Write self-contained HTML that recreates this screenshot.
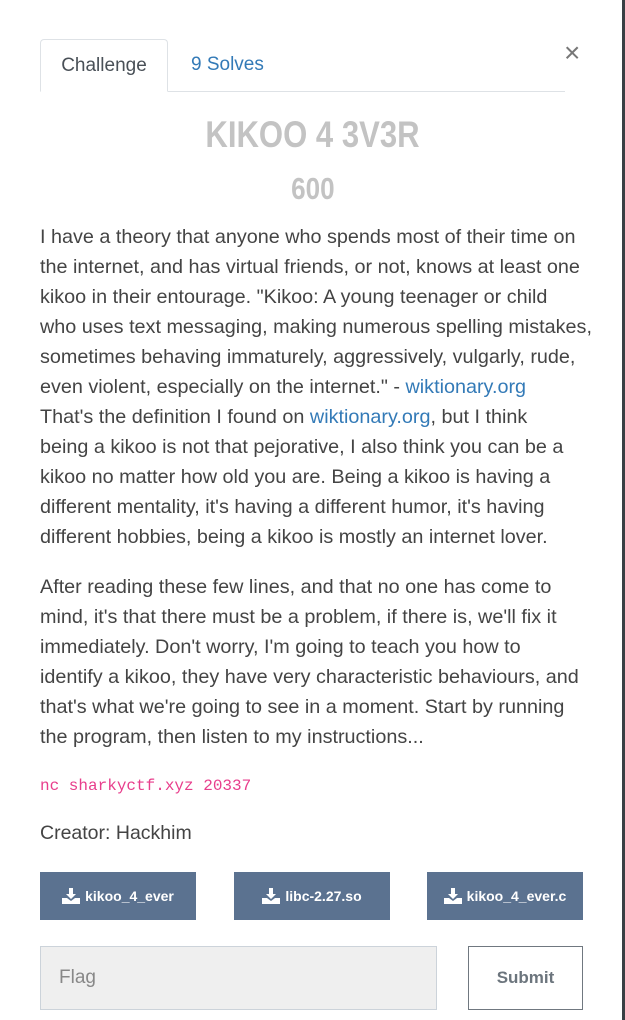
<!DOCTYPE html>
<html><head><style>
body{margin:0;width:625px;height:1020px;background:#fff;font-family:"Liberation Sans",sans-serif;position:relative;overflow:hidden}
.edge{position:absolute;right:0;top:0;width:3px;height:1020px;background:#3a3f44}
.tabs{position:absolute;left:40px;top:39px;width:525px;height:52px;border-bottom:1px solid #dee2e6}
.tab1{position:absolute;left:0;top:0;width:128px;height:53px;border:1px solid #dee2e6;border-bottom:1px solid #fff;border-radius:4px 4px 0 0;box-sizing:border-box;text-align:center;line-height:52px;font-size:19px;color:#495057}
.tab2{position:absolute;left:151px;top:0;line-height:52px;font-size:19px;color:#337ab7}
.x{position:absolute;left:564px;top:37px;font-size:28px;color:#777}
.title{position:absolute;left:0;width:625px;text-align:center;font-weight:bold;color:#c3c3c3}
.title span{display:inline-block;transform:scaleX(0.84)}
.body{position:absolute;left:40px;top:222px;font-size:19.8px;line-height:30px;color:#444;white-space:nowrap}
a{color:#337ab7;text-decoration:none}
.code{position:absolute;left:40px;top:777px;font-family:"Liberation Mono",monospace;font-size:16px;color:#e83e8c}
.creator{position:absolute;left:40px;top:822px;font-size:19.5px;color:#444}
.btn{position:absolute;top:872px;width:156px;height:48px;background:#5b7290;color:#fff;font-size:14px;font-weight:bold;display:flex;align-items:center;justify-content:center;gap:5px}
.inp{position:absolute;left:40px;top:946px;width:397px;height:64px;box-sizing:border-box;background:#efefef;border:1px solid #ccd3da;font-size:19px;color:#888;padding-left:18px;line-height:62px}
.sub{position:absolute;left:468px;top:946px;width:115px;height:64px;box-sizing:border-box;border:1px solid #707880;text-align:center;line-height:62px;font-size:17px;font-weight:bold;color:#6c757d}
</style></head><body>
<div class="edge"></div>
<div class="tabs"><div class="tab1">Challenge</div><div class="tab2">9 Solves</div></div>
<div class="x">×</div>
<div class="title" style="top:114px;font-size:37px;"><span>KIKOO 4 3V3R</span></div>
<div class="title" style="top:171px;font-size:31px;"><span>600</span></div>
<div class="body">I have a theory that anyone who spends most of their time on<br>the internet, and has virtual friends, or not, knows at least one<br>kikoo in their entourage. "Kikoo: A young teenager or child<br>who uses text messaging, making numerous spelling mistakes,<br>sometimes behaving immaturely, aggressively, vulgarly, rude,<br>even violent, especially on the internet." - <a>wiktionary.org</a><br>That's the definition I found on <a>wiktionary.org</a>, but I think<br>being a kikoo is not that pejorative, I also think you can be a<br>kikoo no matter how old you are. Being a kikoo is having a<br>different mentality, it's having a different humor, it's having<br>different hobbies, being a kikoo is mostly an internet lover.<div style="height:20px"></div>After reading these few lines, and that no one has come to<br>mind, it's that there must be a problem, if there is, we'll fix it<br>immediately. Don't worry, I'm going to teach you how to<br>identify a kikoo, they have very characteristic behaviours, and<br>that's what we're going to see in a moment. Start by running<br>the program, then listen to my instructions...</div>
<div class="code">nc sharkyctf.xyz 20337</div>
<div class="creator">Creator: Hackhim</div>
<div class="btn" style="left:40px"><svg width="18" height="16" viewBox="0 0 18 16"><path d="M7 0h4v6h3l-5 5-5-5h3z M0 10h5l4 3 4-3h5v6H0z" fill="#fff"/></svg>kikoo_4_ever</div>
<div class="btn" style="left:234px"><svg width="18" height="16" viewBox="0 0 18 16"><path d="M7 0h4v6h3l-5 5-5-5h3z M0 10h5l4 3 4-3h5v6H0z" fill="#fff"/></svg>libc-2.27.so</div>
<div class="btn" style="left:427px"><svg width="18" height="16" viewBox="0 0 18 16"><path d="M7 0h4v6h3l-5 5-5-5h3z M0 10h5l4 3 4-3h5v6H0z" fill="#fff"/></svg>kikoo_4_ever.c</div>
<div class="inp">Flag</div>
<div class="sub">Submit</div>
</body></html>
